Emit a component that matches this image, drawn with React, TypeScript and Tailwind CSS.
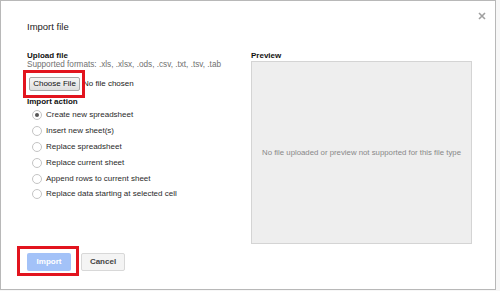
import React from "react";

const actions = [
  "Create new spreadsheet",
  "Insert new sheet(s)",
  "Replace spreadsheet",
  "Replace current sheet",
  "Append rows to current sheet",
  "Replace data starting at selected cell",
];

function Radio({ checked }: { checked?: boolean }) {
  return (
    <span className="w-[10px] h-[10px] rounded-full border border-[#c4c4c4] bg-white flex items-center justify-center shrink-0">
      {checked && <span className="w-[4px] h-[4px] rounded-full bg-[#555]" />}
    </span>
  );
}

export default function App() {
  return (
    <div className="w-[500px] h-[291px] bg-[#f7f7f7] overflow-hidden font-['Liberation_Sans',Arial,sans-serif]">
      <div className="relative w-[496px] h-[290px] bg-white border border-[#b8b8b8] flex flex-col pl-[26px]">
        {/* close */}
        <button className="absolute right-[9px] top-[11px] w-[8px] h-[8px] text-[#a0a0a0]">
          <svg viewBox="0 0 8 8" width="8" height="8">
            <path d="M1 1L7 7M7 1L1 7" stroke="currentColor" strokeWidth="1.6" />
          </svg>
        </button>

        <div className="pt-[20px] text-[9.5px] leading-[12px] text-[#222]">Import file</div>

        <div className="flex mt-[18px]">
          {/* left column */}
          <div className="w-[224px]">
            <div className="text-[8px] leading-[9px] font-bold text-[#111]">Upload file</div>
            <div className="text-[8.2px] leading-[9px] text-[#707070]">
              Supported formats: .xls, .xlsx, .ods, .csv, .txt, .tsv, .tab
            </div>
            <div className="relative mt-[8px] flex items-center h-[14px]">
              <button className="ml-[2px] h-[14px] w-[51px] border border-[#a9a9a9] rounded-[2px] bg-gradient-to-b from-[#f6f6f6] to-[#dedede] text-[8px] leading-[12px] text-[#111]">
                Choose File
              </button>
              <span className="ml-[3px] text-[8px] text-[#222]">No file chosen</span>
              <span className="absolute left-[-4px] top-[-7px] w-[62px] h-[28px] border-[3px] border-[#e2141e]" />
            </div>
            <div className="mt-[6px] text-[8px] leading-[9px] font-bold text-[#111]">Import action</div>
            <div className="mt-[1.5px] flex flex-col">
              {actions.map((a, i) => (
                <label key={a} className="h-[15.8px] flex items-center pl-[5px] gap-[4px] text-[8px] text-[#2a2a2a]">
                  <Radio checked={i === 0} />
                  <span>{a}</span>
                </label>
              ))}
            </div>
          </div>

          {/* preview */}
          <div className="w-[221px]">
            <div className="text-[8px] leading-[9px] font-bold text-[#111]">Preview</div>
            <div className="mt-[1px] h-[183px] bg-[#eeeeee] border border-[#d4d4d4] flex items-center justify-center text-[7.8px] text-[#888]">
              No file uploaded or preview not supported for this file type
            </div>
          </div>
        </div>

        <div className="mt-auto mb-[18px] flex gap-[10px] relative">
          <button className="w-[44px] h-[18px] rounded-[2px] bg-[#a3c2f8] text-white text-[8px] font-bold">
            Import
          </button>
          <button className="w-[44px] h-[18px] rounded-[2px] bg-[#f4f4f4] border border-[#d8d8d8] text-[#444] text-[8px] font-bold">
            Cancel
          </button>
          <span className="absolute left-[-10px] top-[-7px] w-[62px] h-[30px] border-[3px] border-[#e2141e]" />
        </div>
      </div>
    </div>
  );
}
